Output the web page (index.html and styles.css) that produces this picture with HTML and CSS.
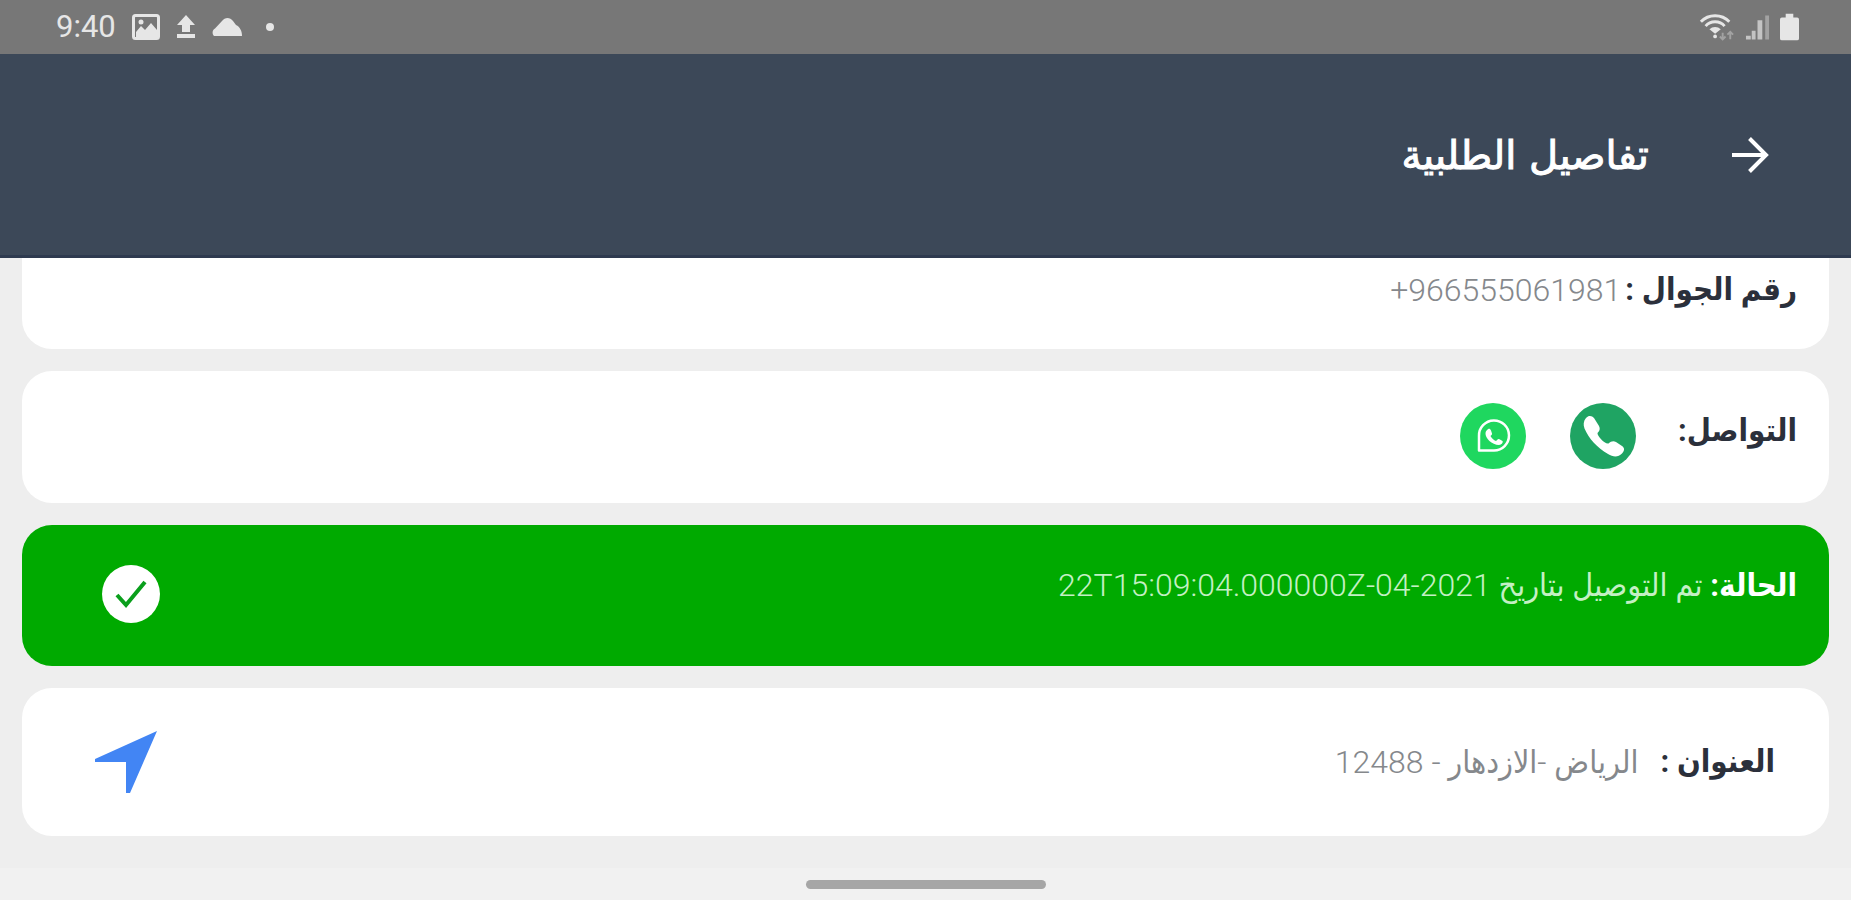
FILE: index.html
```html
<!DOCTYPE html>
<html lang="ar" dir="rtl">
<head>
    <meta charset="UTF-8">
    <meta name="viewport" content="width=device-width, initial-scale=1.0">
    <title>تفاصيل الطلبية</title>

    <link rel="stylesheet" href="styles.css">
</head>

<body>
    <!-- Status bar -->
    <div class="status-bar" dir="ltr">
        <div class="status-left">
            <span class="clock">9:40</span>
            <svg width="28" height="26" viewBox="0 0 28 26">
                <rect x="1.500" y="1.500" width="25" height="23" rx="2" fill="none" stroke="currentColor" stroke-width="3"/>
                <path d="M4 22v-4l5-6 4 4 6-7 6 7v7H4z" fill="currentColor"/>
                <circle cx="9" cy="8" r="2.500" fill="currentColor"/>
            </svg>
            <svg width="20" height="24" viewBox="0 0 20 24">
                <path d="M10 0l9 10h-5v7H6v-7H1z" fill="currentColor"/>
                <rect x="1" y="19" width="18" height="4" fill="currentColor"/>
            </svg>
            <svg width="30" height="18" viewBox="0 0 30 18">
                <path d="M2 18C0 16 0 12 3 10.500L10 3c3-4 8-4 11 0l3 4c4 2 6 6 6 11z" fill="currentColor"/>
            </svg>
            <span class="dot"></span>
        </div>
        <div class="status-right">
            <svg width="36" height="28" viewBox="0 0 38 28">
                <path d="M2 8.500C10 0 24 0 32 8.500" fill="none" stroke="currentColor" stroke-width="3"/>
                <path d="M7 13c5-6 15-6 20 0" fill="none" stroke="currentColor" stroke-width="3"/>
                <path d="M11 16.500c3-3.500 9-3.500 12 0L17 21z" fill="currentColor"/>
                <circle cx="17" cy="24" r="2" fill="currentColor"/>
                <path d="M25 20v7m-3-3l3 3 3-3M33 27v-8m-3 3l3-3 3 3" fill="none" stroke="#a2a2a2" stroke-width="2"/>
            </svg>
            <svg width="25" height="26" viewBox="0 0 26 26">
                <path d="M1 26v-4h5v4zM7 26v-9h4v9zM13 26V6h5v20z" fill="#c4c4c4"/>
                <rect x="21" y="1" width="4" height="25" fill="#a2a2a2"/>
            </svg>
            <svg width="19" height="28" viewBox="0 0 20 28">
                <path d="M6 0h8v4h4a2 2 0 0 1 2 2v20a2 2 0 0 1-2 2H2a2 2 0 0 1-2-2V6a2 2 0 0 1 2-2h4z" fill="currentColor"/>
            </svg>
        </div>
    </div>

    <!-- Header -->
    <header class="app-header">
        <button type="button" class="back-btn" aria-label="رجوع">
            <svg width="38" height="38" viewBox="0 0 38 38">
                <path d="M1 19h34M18.500 2.500L35 19 18.500 35.500" fill="none" stroke="#fff" stroke-width="4"/>
            </svg>
        </button>
        <h1>تفاصيل الطلبية</h1>
    </header>

    <main class="content">
        <!-- Phone number -->
        <section class="card card-phone">
            <span class="label">رقم الجوال :</span>
            <span class="value" dir="ltr">+966555061981</span>
        </section>

        <!-- Contact -->
        <section class="card card-contact">
            <span class="label">التواصل:</span>
            <div class="contact-links">
                <a href="tel:+966555061981" class="round call" aria-label="اتصال">
                    <svg width="66" height="66" viewBox="0 0 66 66">
                        <path d="M16 15c2.500-3 6-2.500 8 0l5 8c1.500 3 .500 5-1.500 7-.500 3 7.500 11.500 11 10.500 2.500-2.500 5-3 7.500-1.500l6 4c3 2 2.500 5 0 7.500-4 4-9 3.500-14 .500C27 44.500 19 36 14.500 25.500c-1.500-4-1-7.500 1.500-10.500z" fill="#fff"/>
                    </svg>
                </a>
                <a href="https://wa.me/966555061981" class="round whatsapp" aria-label="واتساب">
                    <svg width="66" height="66" viewBox="0 0 66 66">
                        <path d="M19 47.500V33a15 15 0 1 1 15 14.500z" fill="none" stroke="#fff" stroke-width="2.500" stroke-linejoin="round"/>
                        <path d="M27 27c2-2 3-1.500 4 .500l1 3c.400 1-1 2-1.500 2.500 1.500 2.500 3 4 5.500 5 1-1 2-2.500 3-2l3.500 2c1 1-1 4-3.500 4-7 0-14-7-13.500-12 0-1 .500-2 1.500-3z" fill="#fff"/>
                    </svg>
                </a>
            </div>
        </section>

        <!-- Status -->
        <section class="card card-status">
            <p class="status-text">
                <span class="label">الحالة:</span>
                <span class="value">تم التوصيل بتاريخ 2021-04-22T15:09:04.000000Z</span>
            </p>
            <svg width="58" height="58" viewBox="0 0 58 58">
                <circle cx="29" cy="29" r="29" fill="#fff"/>
                <path d="M15 30l9 10 19-23" fill="none" stroke="#0a9f1c" stroke-width="4"/>
            </svg>
        </section>

        <!-- Address -->
        <section class="card card-address">
            <span class="label">العنوان :</span>
            <span class="value">الرياض -الازدهار - 12488</span>
            <button type="button" class="locate" aria-label="الموقع">
                <svg width="64" height="64" viewBox="0 0 64 64">
                    <path d="M63 1L36 63h-4V32H1v-3z" fill="#4285f4"/>
                </svg>
            </button>
        </section>
    </main>

    <div class="nav-bar">
        <span class="home-handle"></span>
    </div>
</body>
</html>
```
FILE: styles.css
```css
* {
    box-sizing: border-box;
}

body {
    margin: 0;
    min-height: 100vh;
    display: flex;
    flex-direction: column;
    background: #eeeeee;
    color: #2b303b;
    font-family: Roboto, "DejaVu Sans Condensed", "DejaVu Sans", sans-serif;
    font-size: 31px;
    line-height: 40px;
}

.status-bar {
    display: flex;
    justify-content: space-between;
    align-items: center;
    height: 54px;
    padding: 0 52px 0 56px;
    background: #777777;
    color: #e6e6e6;
}

.status-left,
.status-right {
    display: flex;
    align-items: center;
    gap: 10px;
}

.status-left {
    gap: 16px;
}

.clock {
    font-size: 31px;
}

.dot {
    width: 8px;
    height: 8px;
    margin-left: 8px;
    border-radius: 50%;
    background: #e6e6e6;
}

.app-header {
    display: flex;
    align-items: center;
    gap: 82px;
    height: 204px;
    padding: 0 82px;
    background: #3c4858;
    border-bottom: 3px solid #2e3a4f;
}

.app-header h1 {
    margin: 0;
    color: #fff;
    font-family: "DejaVu Sans", sans-serif;
    font-size: 40px;
    font-weight: 500;
    -webkit-text-stroke: 1px #fff;
}

.back-btn,
.locate {
    display: flex;
    padding: 0;
    border: 0;
    background: none;
    cursor: pointer;
}

.content {
    flex: 1;
    display: flex;
    flex-direction: column;
    gap: 22px;
    padding: 0 22px 32px;
}

.card {
    display: flex;
    align-items: center;
    background: #fff;
    border-radius: 30px;
    padding: 0 32px;
}

.label {
    font-weight: 700;
}

.value {
    color: #85888c;
    font-size: 32px;
    font-weight: 300;
}

.card-phone {
    align-items: flex-start;
    gap: 4px;
    height: 91px;
    padding-top: 12px;
    border-radius: 0 0 30px 30px;
}

.card-contact {
    align-items: flex-start;
    gap: 42px;
    height: 132px;
    padding-top: 32px;
}

.card-contact .label {
    padding-top: 8px;
}

.contact-links {
    display: flex;
    gap: 44px;
}

.round {
    display: flex;
    border-radius: 50%;
}

.call {
    background: #1fa463;
}

.whatsapp {
    background: #1fd75f;
}

.card-status {
    justify-content: space-between;
    align-items: flex-start;
    height: 141px;
    padding: 40px 32px 40px 80px;
    background: #00aa00;
    color: #fff;
}

.status-text {
    margin: 0;
}

.card-status .value {
    color: #c4f0c4;
}

.card-address {
    gap: 22px;
    height: 148px;
    padding: 0 54px 0 72px;
}

.locate {
    margin-right: auto;
}

.nav-bar {
    display: flex;
    justify-content: center;
    align-items: center;
    height: 33px;
    background: #f1f1f1;
}

.home-handle {
    width: 240px;
    height: 9px;
    border-radius: 5px;
    background: #a6a6a6;
}
```
